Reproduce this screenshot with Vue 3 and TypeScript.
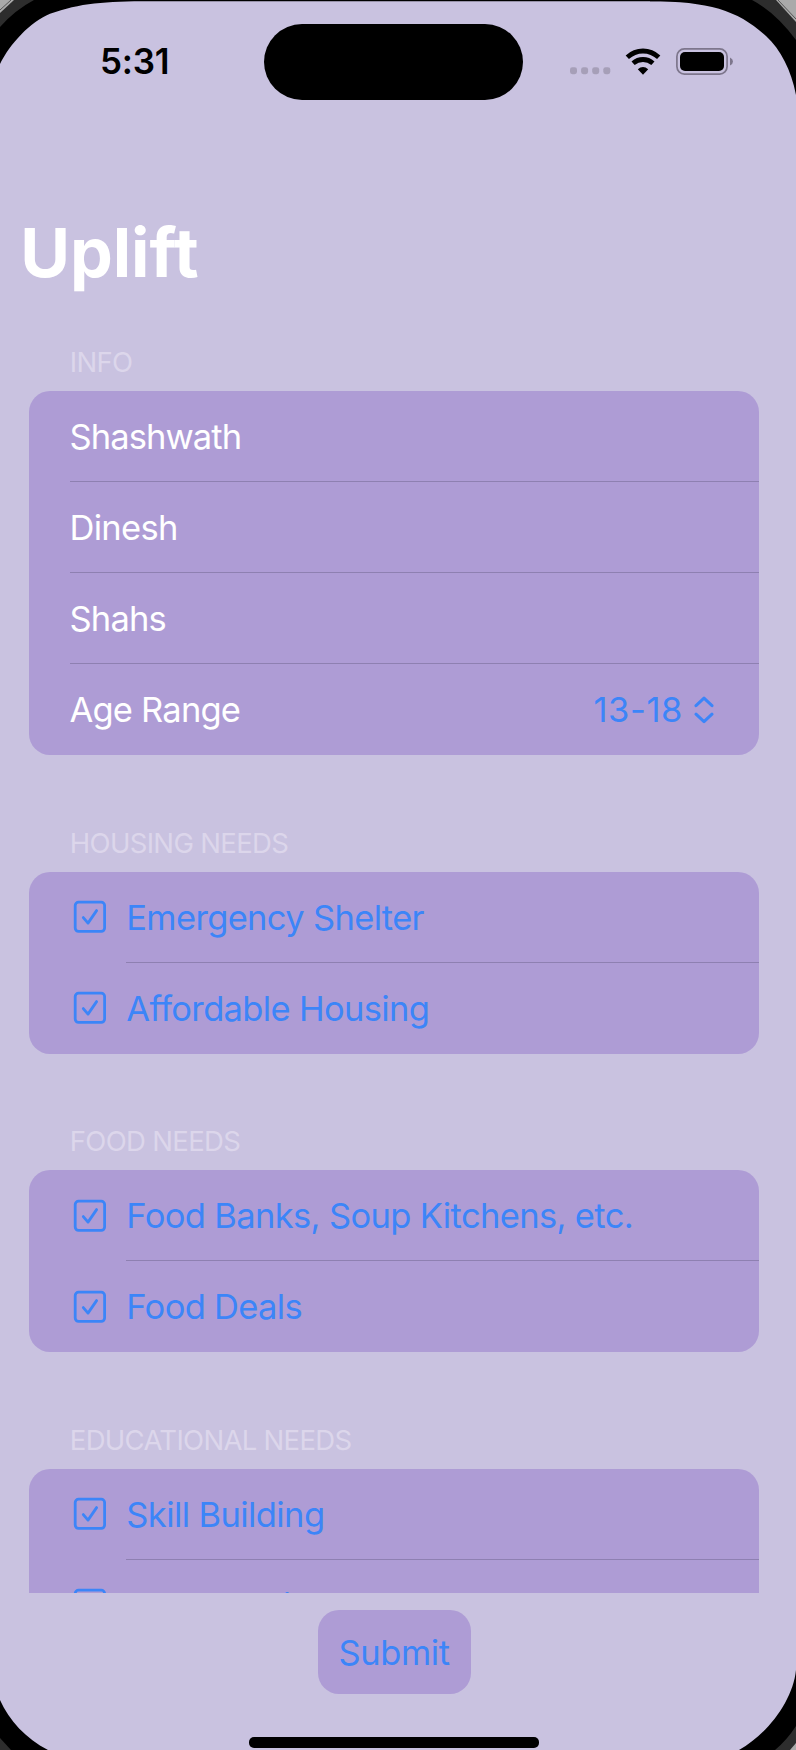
<script setup lang="ts">
interface Need {
  label: string
  spacing: number
}

interface NeedSection {
  title: string
  spacing: number
  needs: Need[]
}

const fields: Need[] = [
  { label: 'Shashwath', spacing: -0.9 },
  { label: 'Dinesh', spacing: -0.7 },
  { label: 'Shahs', spacing: -0.8 },
]

const sections: NeedSection[] = [
  {
    title: 'HOUSING NEEDS',
    spacing: -0.68,
    needs: [
      { label: 'Emergency Shelter', spacing: -0.66 },
      { label: 'Affordable Housing', spacing: -0.65 },
    ],
  },
  {
    title: 'FOOD NEEDS',
    spacing: -0.68,
    needs: [
      { label: 'Food Banks, Soup Kitchens, etc.', spacing: -0.64 },
      { label: 'Food Deals', spacing: -0.68 },
    ],
  },
  {
    title: 'EDUCATIONAL NEEDS',
    spacing: -0.7,
    needs: [
      { label: 'Skill Building', spacing: -0.6 },
      { label: 'Scholarships', spacing: -0.65 },
    ],
  },
]
</script>

<template>
  <div class="phone">
    <header class="status">
      <span class="time">5:31</span>
      <div class="island"></div>
      <div class="indicators">
        <svg class="dots" width="41" height="8" viewBox="0 0 41 8">
          <rect v-for="n in 4" :key="n" :x="(n - 1) * 11.1" y="0.2" width="7" height="7" rx="2.4" fill="#a69fb8" />
        </svg>
        <svg class="wifi" width="36" height="28" viewBox="0 0 36 28">
          <g fill="none" stroke="#000" stroke-width="4.8">
            <path d="M2.3 9.3C11.3 .9 24.7 .9 33.7 9.3" />
            <path d="M8.1 15.3C13.9 10.2 22.1 10.2 27.9 15.3" />
          </g>
          <path d="M18 26.7L12.8 21.2Q18 16.9 23.2 21.2Z" />
        </svg>
        <svg class="battery" width="58" height="28" viewBox="0 0 58 28">
          <rect x="0.9" y="0.9" width="50.2" height="25.2" rx="7.5" fill="none" stroke="#7d768c" stroke-width="1.7" />
          <rect x="4" y="4" width="44" height="19" rx="5" />
          <path d="M54 9.5Q57 11 57 13.5Q57 16 54 17.5Z" fill="#7d768c" />
        </svg>
      </div>
    </header>

    <h1 class="title">Uplift</h1>

    <main class="form">
      <section class="group">
        <h2 class="heading">INFO</h2>
        <div class="card">
          <div v-for="field in fields" :key="field.label" class="row">
            <div class="content">
              <span :style="{ letterSpacing: field.spacing + 'px' }">{{ field.label }}</span>
            </div>
          </div>
          <div class="row">
            <div class="content">
              <span class="age">Age Range</span>
              <span class="picker">
                <span class="range">13-18</span>
                <svg width="20" height="28" viewBox="0 0 20 28">
                  <path d="M2 9.7L10 2.2L18 9.7M2 18.2L10 25.7L18 18.2" />
                </svg>
              </span>
            </div>
          </div>
        </div>
      </section>

      <section v-for="section in sections" :key="section.title" class="group">
        <h2 class="heading" :style="{ letterSpacing: section.spacing + 'px' }">{{ section.title }}</h2>
        <div class="card">
          <div v-for="need in section.needs" :key="need.label" class="row need">
            <svg class="check" width="34" height="34" viewBox="0 0 34 34">
              <rect x="2.2" y="2.2" width="29.4" height="29.2" rx="3.4" />
              <path d="M10.3 17.6L15 23.1L23.6 10.6" />
            </svg>
            <div class="content">
              <span :style="{ letterSpacing: need.spacing + 'px' }">{{ need.label }}</span>
            </div>
          </div>
        </div>
      </section>
    </main>

    <footer class="footer">
      <button class="submit" type="button">Submit</button>
      <div class="home"></div>
    </footer>

    <svg class="bezel" width="796" height="1750" viewBox="0 0 796 1750">
      <g fill="#000">
        <path d="M0 0H796V1.2H150C105 1.2 80 3 50 13.8C30 22 10 44 0 64Z" />
        <path d="M796 0V95C791 70 781 50 766 36C739 11 710 1.2 650 1.2V0Z" />
        <path d="M0 1700C9 1720 26 1739 48 1750H0Z" />
        <path d="M796 1670C793 1700 768 1734 739 1750H796Z" />
      </g>
      <g fill="#2d2d2d">
        <path d="M0 0H34Q15 10 0 27Z" />
        <path d="M796 0H752Q775 12 796 40Z" />
        <path d="M0 1738L11 1750H0Z" />
        <path d="M796 1726Q787 1740 775 1750H796Z" />
      </g>
      <g fill="#aaa">
        <path d="M0 0H14L0 13Z" />
        <path d="M796 0H776L796 22Z" />
        <path d="M796 1743L790 1750H796Z" />
      </g>
      <g fill="none" stroke="#555" stroke-width="1">
        <path d="M11 0L0 10M778 0L796 19" />
      </g>
    </svg>
  </div>
</template>

<style>
body {
  margin: 0;
}
</style>

<style scoped>
.phone {
  position: relative;
  display: flex;
  flex-direction: column;
  width: 796px;
  height: 1750px;
  overflow: hidden;
  background: #c9c2e0;
  font-family: Inter, "Liberation Sans", sans-serif;
  font-size: 34.5px;
  font-variant-ligatures: none;
  color: #fff;
}

.status {
  display: flex;
  flex: none;
  height: 100px;
  padding: 24px 0 0 100px;
  box-sizing: border-box;
  color: #000;
}

.time {
  width: 164px;
  font-size: 35px;
  font-weight: 600;
  line-height: 74px;
  letter-spacing: -0.2px;
}

.island {
  width: 259px;
  height: 76.3px;
  border-radius: 38px;
  background: #000;
}

.indicators {
  display: flex;
  align-items: flex-start;
  padding: 24px 0 0 47.4px;
}

.dots {
  margin-top: 19px;
}

.wifi {
  margin-left: 13.6px;
}

.battery {
  margin-left: 15.3px;
}

.title {
  flex: none;
  height: 88px;
  margin: 108px 0 0 20.3px;
  font-size: 68px;
  font-weight: 700;
  line-height: 88px;
  letter-spacing: -0.1px;
}

.form {
  flex: none;
  height: 1257.4px;
  margin-top: 40px;
  padding: 0 37.5px 0 28.5px;
  overflow: hidden;
}

.group {
  margin-bottom: 61.6px;
}

.heading {
  height: 55px;
  margin: 0;
  padding-left: 41.3px;
  box-sizing: border-box;
  font-size: 27.5px;
  font-weight: 400;
  line-height: 53px;
  letter-spacing: -0.7px;
  color: #dcd6eb;
}

.card {
  border-radius: 21px;
  background: #ae9cd5;
}

.row {
  display: flex;
  align-items: center;
  height: 91px;
  padding-left: 41px;
}

.content {
  display: flex;
  flex: 1;
  align-items: center;
  justify-content: space-between;
  height: 91px;
  box-sizing: border-box;
  padding-top: 1.4px;
  border-bottom: 1px solid #8e80b1;
}

.row:last-child .content {
  border-bottom-color: transparent;
}

.age {
  letter-spacing: -0.8px;
}

.picker {
  display: flex;
  align-items: center;
  gap: 11px;
  padding-right: 44.5px;
  color: #3c85f8;
}

.range {
  letter-spacing: 0.6px;
}

.picker svg {
  fill: none;
  stroke: #3c85f8;
  stroke-width: 3;
  stroke-linecap: round;
  stroke-linejoin: round;
}

.need {
  padding-left: 44px;
  color: #3c85f8;
}

.check {
  flex: none;
  margin-right: 19.8px;
  fill: none;
  stroke: #3c85f8;
  stroke-width: 2.8;
  stroke-linecap: round;
  stroke-linejoin: round;
}

.footer {
  display: flex;
  flex-direction: column;
  align-items: center;
  padding: 17px 8px 0 0;
}

.submit {
  width: 153px;
  height: 83.4px;
  padding: 1px 0 0;
  border: 0;
  border-radius: 21px;
  background: #ae9cd5;
  font: inherit;
  letter-spacing: -0.4px;
  color: #3c85f8;
}

.home {
  width: 290px;
  height: 10.5px;
  margin-top: 43.6px;
  border-radius: 5px;
  background: #000;
}

.bezel {
  position: absolute;
  top: 0;
  left: 0;
  pointer-events: none;
}
</style>
